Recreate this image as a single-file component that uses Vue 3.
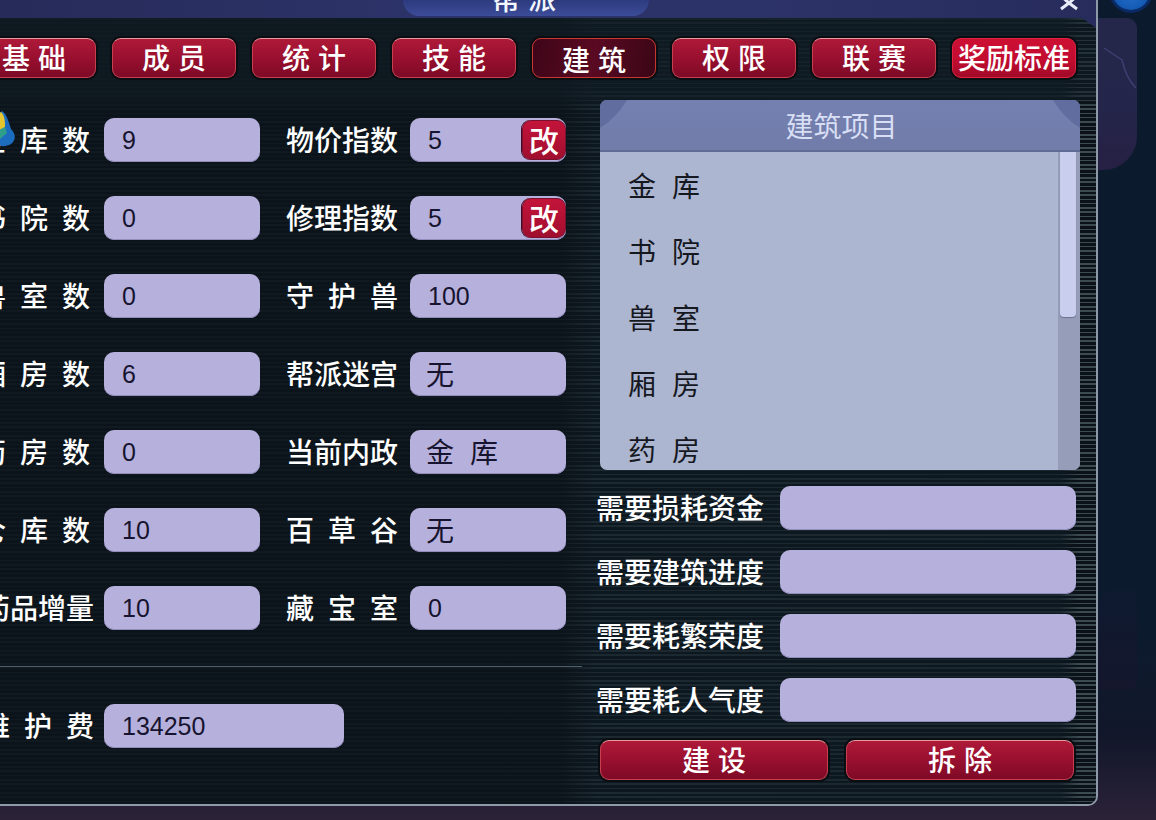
<script setup>
const tabs = [
  { t: '基础' }, { t: '成员' }, { t: '统计' }, { t: '技能' },
  { t: '建筑', active: true }, { t: '权限' }, { t: '联赛' }, { t: '奖励标准', bright: true }
]
const rows = [
  [{ l: '金库数', v: '9' }, { l: '物价指数', v: '5', edit: true }],
  [{ l: '书院数', v: '0' }, { l: '修理指数', v: '5', edit: true }],
  [{ l: '兽室数', v: '0' }, { l: '守护兽', v: '100' }],
  [{ l: '厢房数', v: '6' }, { l: '帮派迷宫', v: '无', cjk: true }],
  [{ l: '药房数', v: '0' }, { l: '当前内政', v: '金库', cjk: true }],
  [{ l: '仓库数', v: '10' }, { l: '百草谷', v: '无', cjk: true }],
  [{ l: '药品增量', v: '10', nudge: true }, { l: '藏宝室', v: '0' }]
]
const items = ['金库', '书院', '兽室', '厢房', '药房']
const needs = ['需要损耗资金', '需要建筑进度', '需要耗繁荣度', '需要耗人气度']
</script>

<template>
  <div class="page">
    <section class="window">
      <header class="titlebar">
        <div class="title-pill"><span class="title-text">帮派</span></div>
        <svg class="close" width="24" height="12" viewBox="0 0 24 12">
          <path d="M4 -4 L12 3 L20 -4 M12 3 L20 9 M12 3 L4 9" fill="none" stroke="#e8ecf8" stroke-width="3" />
        </svg>
      </header>

      <div class="content">
        <nav class="tabs">
          <button
            v-for="tab in tabs"
            :key="tab.t"
            class="tab"
            :class="{ active: tab.active, bright: tab.bright, long: tab.t.length > 2 }"
          >{{ tab.t }}</button>
        </nav>

        <div class="main">
          <div class="left">
            <div class="stats">
              <div v-for="(row, i) in rows" :key="i" class="row">
                <div v-for="cell in row" :key="cell.l" class="stat">
                  <span class="label" :class="{ nudge: cell.nudge }">
                    {{ cell.l }}
                    <svg v-if="cell.l === '金库数'" class="gem" width="24" height="38" viewBox="0 0 24 38">
                      <path d="M8 0 C13 3 15 12 17 18 C21 22 23 28 17 33 C10 37 3 35 0 30 L0 6 Z" fill="#1c6cc0" />
                      <path d="M7 1 C11 5 11 11 11 16 L4 20 L0 16 L0 7 Z" fill="#e6c62e" />
                      <path d="M4 20 L11 16 L13 22 L6 28 L1 26 Z" fill="#2f9f8c" />
                    </svg>
                  </span>
                  <div class="value" :class="{ cjk: cell.cjk }">
                    {{ cell.v }}
                    <button v-if="cell.edit" class="edit">改</button>
                  </div>
                </div>
              </div>
            </div>
            <div class="divider"></div>
            <div class="stat footer-stat">
              <span class="label nudge">维护费</span>
              <div class="value wide">134250</div>
            </div>
          </div>

          <div class="right">
            <div class="panel">
              <div class="panel-head">
                <svg class="corner corner-l" width="28" height="28" viewBox="0 0 28 28"><path d="M0 0 H27 Q16 18 0 28 Z" /></svg>
                建筑项目
                <svg class="corner corner-r" width="28" height="28" viewBox="0 0 28 28"><path d="M28 0 H1 Q12 18 28 28 Z" /></svg>
              </div>
              <div class="panel-body">
                <ul class="list">
                  <li v-for="item in items" :key="item">{{ item }}</li>
                </ul>
                <div class="track"><div class="thumb"></div></div>
              </div>
            </div>

            <div class="needs">
              <div v-for="n in needs" :key="n" class="need">
                <span class="need-label">{{ n }}</span>
                <div class="value need-value"></div>
              </div>
            </div>

            <div class="actions">
              <button class="action">建设</button>
              <button class="action">拆除</button>
            </div>
          </div>
        </div>
      </div>
    </section>

    <aside class="side">
      <div class="orb"></div>
      <div class="side-top">
        <svg width="39" height="152" viewBox="0 0 39 152">
          <path d="M6 30 Q18 38 24 42 Q28 60 38 70" fill="none" stroke="#3c4070" stroke-width="1.5" />
        </svg>
      </div>
      <div class="side-bottom"></div>
    </aside>
  </div>
</template>

<style>
html, body { margin: 0; background: #0c1a2e; }
</style>

<style scoped>
.page {
  width: 1156px;
  height: 820px;
  overflow: hidden;
  display: flex;
  align-items: flex-start;
  background: linear-gradient(180deg, #0c1a2e 0, #0c1a2e 78%, #12172a 90%, #2c2238 100%);
  font-family: "Noto Sans CJK SC", "Liberation Sans", sans-serif;
}
.window {
  position: relative;
  flex: none;
  box-sizing: border-box;
  width: 1138px;
  height: 806px;
  margin-left: -40px;
  border-right: 2px solid #8d99a6;
  border-bottom: 2px solid #8d99a6;
  border-bottom-right-radius: 10px;
  overflow: hidden;
  background: #0c141b;
}
.titlebar {
  position: relative;
  height: 18px;
  display: flex;
  justify-content: center;
  background: linear-gradient(90deg, #262a58 0, #2c3368 40%, #2c3368 70%, #272c5c 100%);
}
.titlebar::after {
  content: "";
  position: absolute;
  right: 0;
  top: 18px;
  width: 14px;
  height: 10px;
  background: #272c5c;
  clip-path: polygon(0 0, 100% 0, 100% 100%);
}
.title-pill {
  width: 246px;
  height: 16px;
  margin-left: -4px;
  border-radius: 0 0 40px 40px;
  display: flex;
  justify-content: center;
  align-items: flex-end;
  overflow: hidden;
  background: linear-gradient(180deg, #2d3a7e, #3c4c98);
}
.title-text {
  flex: none;
  font-size: 28px;
  line-height: 28px;
  letter-spacing: 8px;
  margin-bottom: 4px;
  margin-right: 4px;
  text-indent: 8px;
  color: #f4f6ff;
  font-weight: 500;
}
.close {
  position: absolute;
  right: 15px;
  top: 0;
}
.content {
  height: 786px;
  background:
    linear-gradient(180deg, rgba(16,28,36,.55) 0, rgba(16,28,36,.55) 78px, rgba(12,20,27,0) 90px),
    linear-gradient(90deg, rgba(12,20,27,.9) 0, rgba(12,20,27,.9) 600px, rgba(14,26,34,.68) 635px, rgba(14,26,34,.72) 1100px, rgba(14,26,34,0) 1120px),
    repeating-linear-gradient(180deg, #3c4a52 0, #3c4a52 1.5px, #0a1118 1.5px, #0a1118 4.3px);
}
.tabs {
  display: flex;
  gap: 16px;
  padding: 20px 0 0 12px;
}
.tab, .action {
  box-sizing: border-box;
  padding: 0 0 2px;
  color: #fff;
  font-family: inherit;
  font-weight: 500;
  font-size: 28px;
  line-height: 36px;
  border: 1px solid #c8404f;
  border-top-color: #e89a9e;
  border-radius: 9px;
  background: linear-gradient(180deg, #ae1a38 0, #9c1030 45%, #7e0a26 100%);
  box-shadow: 0 0 0 2px #0a0e12;
}
.tab {
  width: 124px;
  height: 40px;
  letter-spacing: 8px;
  text-indent: 8px;
}
.tab.long {
  letter-spacing: 0;
  text-indent: 0;
}
.tab.bright {
  background: linear-gradient(180deg, #cc1034 0, #c20c30 55%, #a20a28 100%);
  border-color: #e2203f;
}
.tab.active {
  padding: 2px 0 0;
  background: linear-gradient(100deg, #3e0518 0, #5a0a22 50%, #3a0616 100%);
  border-color: #c8372f;
}
.main {
  display: flex;
  margin-top: 18px;
}
.left {
  box-sizing: border-box;
  flex: none;
  width: 622px;
  height: 690px;
}
.stats {
  display: flex;
  flex-direction: column;
  gap: 34px;
  padding: 22px 0 0 18px;
}
.row {
  display: flex;
  gap: 26px;
}
.stat {
  display: flex;
  align-items: center;
  gap: 14px;
}
.stat + .stat {
  gap: 12px;
}
.label {
  position: relative;
  width: 112px;
  padding-bottom: 2px;
  color: #fff;
  font-size: 28px;
  font-weight: 500;
  line-height: 40px;
  text-align: justify;
  text-align-last: justify;
}
.label.nudge {
  transform: translateX(4px);
}
.gem {
  position: absolute;
  left: 16px;
  top: -8px;
}
.value {
  position: relative;
  box-sizing: border-box;
  width: 156px;
  height: 44px;
  padding-left: 18px;
  border-radius: 10px;
  background: #b6b0dc;
  box-shadow: inset 0 -1px 0 #918cbc;
  color: #16142f;
  font-family: "Liberation Sans", sans-serif;
  font-size: 25px;
  line-height: 45px;
}
.value.cjk {
  padding-left: 16px;
  font-family: "Noto Sans CJK SC", sans-serif;
  font-size: 28px;
  line-height: 42px;
  letter-spacing: 16px;
}
.value.wide {
  width: 240px;
}
.edit {
  position: absolute;
  right: 0;
  top: 2px;
  width: 44px;
  height: 40px;
  padding: 0 0 2px;
  border: 1px solid #7a1030;
  border-radius: 9px;
  background: linear-gradient(180deg, #c4143a, #a00e2e);
  box-shadow: -1px 0 0 #4a0a20;
  color: #fff;
  font-family: "Noto Sans CJK SC", sans-serif;
  font-size: 30px;
  font-weight: 500;
  line-height: 36px;
}
.divider {
  height: 1px;
  margin-top: 36px;
  background: #4f5f6c;
}
.footer-stat {
  margin: 37px 0 0 18px;
}
.right {
  flex: none;
  box-sizing: border-box;
  width: 514px;
  padding: 4px 0 0 14px;
}
.panel {
  width: 480px;
  height: 370px;
  margin-left: 4px;
  border-radius: 7px;
  overflow: hidden;
  display: flex;
  flex-direction: column;
}
.panel-head {
  position: relative;
  flex: none;
  box-sizing: border-box;
  height: 52px;
  padding-left: 3px;
  border-bottom: 2px solid #5f6b94;
  background: linear-gradient(180deg, #7480b0, #717ca9);
  color: #d8def4;
  font-size: 28px;
  line-height: 50px;
  text-align: center;
}
.corner {
  position: absolute;
  top: 0;
  fill: #626d9f;
}
.corner-l { left: 0; }
.corner-r { right: 0; }
.panel-body {
  flex: 1;
  display: flex;
  min-height: 0;
  background: #adb6d0;
}
.list {
  flex: 1;
  margin: 0;
  padding: 10px 0 0 28px;
  list-style: none;
  overflow: hidden;
  color: #15181f;
  font-size: 28px;
  line-height: 46px;
  letter-spacing: 16px;
}
.list li {
  height: 46px;
  margin-bottom: 20px;
}
.track {
  flex: none;
  width: 22px;
  box-sizing: border-box;
  padding-left: 2px;
  background: #959db8;
}
.thumb {
  width: 16px;
  height: 165px;
  border-radius: 0 0 4px 4px;
  background: #c9cdee;
  box-shadow: 0 1px 1px #6c7290;
}
.needs {
  display: flex;
  flex-direction: column;
  gap: 20px;
  margin-top: 16px;
}
.need {
  display: flex;
  align-items: center;
  gap: 16px;
}
.need-label {
  width: 168px;
  padding-bottom: 2px;
  color: #fff;
  font-size: 28px;
  font-weight: 500;
  white-space: nowrap;
}
.need-value {
  width: 296px;
}
.actions {
  display: flex;
  gap: 18px;
  margin: 18px 0 0 4px;
}
.action {
  width: 228px;
  height: 40px;
  letter-spacing: 8px;
  text-indent: 8px;
}
.side {
  position: relative;
  flex: none;
  width: 59px;
  height: 690px;
  display: flex;
  flex-direction: column;
  justify-content: space-between;
  padding-top: 18px;
  box-sizing: border-box;
}
.orb {
  position: absolute;
  left: 14px;
  top: -28px;
  width: 38px;
  height: 38px;
  border-radius: 50%;
  background: radial-gradient(circle at 50% 55%, #2470c8 0, #145ab4 60%, #0c3c90 100%);
  box-shadow: 0 0 0 3px #0a2a66;
}
.side-top {
  width: 39px;
  height: 152px;
  border-radius: 0 10px 34px 0;
  background: linear-gradient(180deg, #24274a 0, #24254a 60%, #262044 100%);
}
.side-top svg { display: block; }
.side-bottom {
  width: 39px;
  height: 100px;
  border-radius: 16px 0 8px 0;
  background: linear-gradient(180deg, #0e1a30 0, #14162c 100%);
}
</style>
